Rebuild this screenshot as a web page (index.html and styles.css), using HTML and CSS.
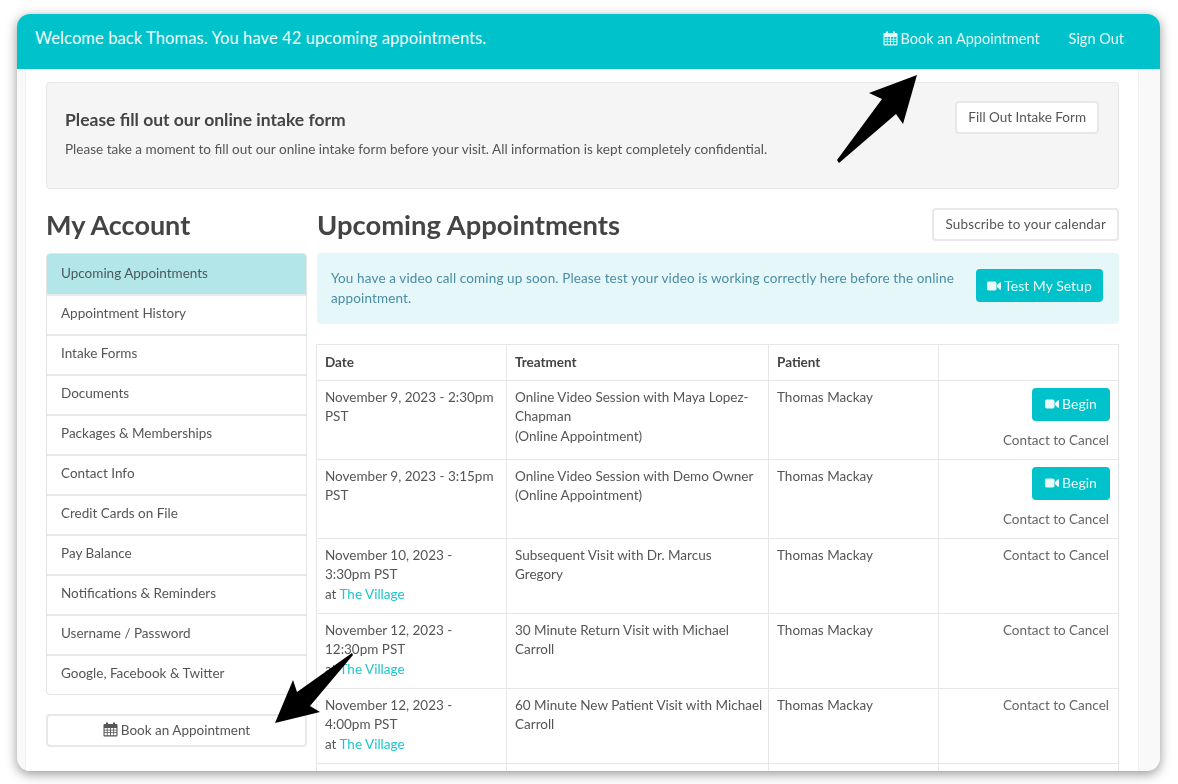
FILE: index.html
```html
<!DOCTYPE html>
<html lang="en">
<head>
<meta charset="utf-8">
<title>My Account</title>
<link rel="stylesheet" href="styles.css">
</head>
<body>
<svg class="icon-defs" width="0" height="0" aria-hidden="true">
  <symbol id="cal" viewBox="0 0 15 15">
    <path fill="currentColor" fill-rule="evenodd" d="M3 0.500h2v1.600h5V0.500h2v1.600h1.500q1 0 1 1v10.400q0 1-1 1H1.500q-1 0-1-1V3.100q0-1 1-1H3zM1.600 6v1.800h2.200V6zM4.600 6v1.800h2.400V6zM7.900 6v1.800h2.400V6zM11.100 6v1.800h2.300V6zM1.600 8.600v1.700h2.200V8.600zM4.600 8.600v1.700h2.400V8.600zM7.900 8.600v1.700h2.400V8.600zM11.100 8.600v1.700h2.300V8.600zM1.600 11.100v2.100h2.200v-2.100zM4.600 11.100v2.100h2.400v-2.100zM7.900 11.100v2.100h2.400v-2.100zM11.100 11.100v2.100h2.300v-2.100z"/>
  </symbol>
  <symbol id="vid" viewBox="0 0 14 10">
    <rect x="0" y="0.500" width="9.500" height="9" rx="1.800" fill="currentColor"/>
    <path fill="currentColor" d="M10 4l3-2.700q1-.5 1 .5v6.400q0 1-1 .5L10 6z"/>
  </symbol>
</svg>
<div class="window">
  <header class="topbar">
    <div class="welcome">Welcome back Thomas. You have 42 upcoming appointments.</div>
    <nav class="topnav">
      <a class="topnav-link"><svg class="ic-cal"><use href="#cal"/></svg>Book an Appointment</a>
      <a class="topnav-link">Sign Out</a>
    </nav>
  </header>
  <div class="page">
    <section class="intake">
      <div>
        <h3 class="intake-title">Please fill out our online intake form</h3>
        <p class="intake-text">Please take a moment to fill out our online intake form before your visit. All information is kept completely confidential.</p>
      </div>
      <a class="btn">Fill Out Intake Form</a>
    </section>
    <div class="columns">
      <aside class="side">
        <h1 class="heading">My Account</h1>
        <ul class="menu">
          <li class="menu-item active">Upcoming Appointments</li>
          <li class="menu-item">Appointment History</li>
          <li class="menu-item">Intake Forms</li>
          <li class="menu-item">Documents</li>
          <li class="menu-item">Packages &amp; Memberships</li>
          <li class="menu-item">Contact Info</li>
          <li class="menu-item">Credit Cards on File</li>
          <li class="menu-item">Pay Balance</li>
          <li class="menu-item">Notifications &amp; Reminders</li>
          <li class="menu-item">Username / Password</li>
          <li class="menu-item">Google, Facebook &amp; Twitter</li>
        </ul>
        <a class="btn btn-block"><svg class="ic-cal"><use href="#cal"/></svg>Book an Appointment</a>
      </aside>
      <main class="main">
        <div class="main-head">
          <h1 class="heading heading-main">Upcoming Appointments</h1>
          <a class="btn btn-sub">Subscribe to your calendar</a>
        </div>
        <div class="alert">
          <p class="alert-text">You have a video call coming up soon. Please test your video is working correctly here before the online appointment.</p>
          <a class="btn-teal btn-setup"><svg class="ic-vid"><use href="#vid"/></svg>Test My Setup</a>
        </div>
        <table class="appts">
          <thead>
            <tr class="row-head"><th class="c-date">Date</th><th class="c-treat">Treatment</th><th class="c-pat">Patient</th><th></th></tr>
          </thead>
          <tbody>
            <tr class="row-a">
              <td>November 9, 2023 - 2:30pm PST</td>
              <td class="treat">Online Video Session with Maya Lopez-Chapman<br>(Online Appointment)</td>
              <td>Thomas Mackay</td>
              <td class="act"><a class="btn-teal btn-begin"><svg class="ic-vid"><use href="#vid"/></svg>Begin</a><div class="cancel">Contact to Cancel</div></td>
            </tr>
            <tr class="row-a">
              <td>November 9, 2023 - 3:15pm PST</td>
              <td class="treat">Online Video Session with Demo Owner<br>(Online Appointment)</td>
              <td>Thomas Mackay</td>
              <td class="act"><a class="btn-teal btn-begin"><svg class="ic-vid"><use href="#vid"/></svg>Begin</a><div class="cancel">Contact to Cancel</div></td>
            </tr>
            <tr class="row-b">
              <td>November 10, 2023 - 3:30pm PST<br>at <a class="place">The Village</a></td>
              <td class="treat">Subsequent Visit with Dr. Marcus<br>Gregory</td>
              <td>Thomas Mackay</td>
              <td class="act">Contact to Cancel</td>
            </tr>
            <tr class="row-b">
              <td>November 12, 2023 - 12:30pm PST<br>at <a class="place">The Village</a></td>
              <td class="treat">30 Minute Return Visit with Michael Carroll</td>
              <td>Thomas Mackay</td>
              <td class="act">Contact to Cancel</td>
            </tr>
            <tr class="row-b">
              <td>November 12, 2023 - 4:00pm PST<br>at <a class="place">The Village</a></td>
              <td class="treat">60 Minute New Patient Visit with Michael Carroll</td>
              <td>Thomas Mackay</td>
              <td class="act">Contact to Cancel</td>
            </tr>
            <tr class="row-b"><td></td><td class="treat"></td><td></td><td></td></tr>
          </tbody>
        </table>
      </main>
    </div>
  </div>
</div>
<svg class="arrows" viewBox="0 0 1178 784" aria-hidden="true">
  <path d="M917 75L869 93L882 99L837 160L839 163L896 114L903 124Z"/>
  <path d="M353 655L352 653L297 692L293 680L275 723L320 712L310 706Z"/>
</svg>
</body>
</html>
```
FILE: styles.css
```css
* { box-sizing: border-box; }
html, body { margin: 0; height: 100%; }
body {
  position: relative;
  width: 1178px;
  height: 784px;
  overflow: hidden;
  background: #fff;
  font-family: "Lato", "Liberation Sans", sans-serif;
  font-size: 13.500px;
  color: #555;
  padding: 14px 18px 13px 17px;
}
.icon-defs { position: absolute; }
.window {
  height: 757px;
  border-radius: 13px;
  overflow: hidden;
  background: #f9f9f9;
  box-shadow: 0 3px 12px rgba(0,0,0,.42);
  display: flex;
  flex-direction: column;
  filter: blur(.4px);
}
.topbar {
  flex: none;
  height: 55px;
  background: #00c2cb;
  color: #fff;
  display: flex;
  align-items: center;
  justify-content: space-between;
  padding: 0 36px 8px 18px;
}
.welcome { font-size: 16.500px; letter-spacing: .1px; color: #f2fdfd; }
.topnav { display: flex; gap: 29px; margin-top: 2px; }
.topnav-link { font-size: 14.500px; color: #e4f8f9; display: flex; align-items: center; }
.ic-cal { width: 15px; height: 15px; margin-right: 3px; flex: none; }
.ic-vid { width: 14px; height: 10px; margin-right: 3px; flex: none; }
.page {
  flex: 1;
  min-height: 0;
  margin: 0 21px 0 8px;
  padding: 13px 19px 0 20px;
  background: #fff;
  border-left: 1px solid #eee;
  border-right: 1px solid #eee;
}
.intake {
  height: 107px;
  background: #f5f5f5;
  border: 1px solid #e6e6e6;
  border-radius: 4px;
  padding: 18px 19px 0 18px;
  display: flex;
  justify-content: space-between;
  align-items: flex-start;
}
.intake-title { margin: 9px 0 10px; font-size: 17.500px; line-height: 20px; font-weight: 700; color: #444; }
.intake-text { margin: 0; font-size: 13.550px; line-height: 18px; color: #555; }
.btn {
  display: flex;
  align-items: center;
  justify-content: center;
  height: 33px;
  padding: 0 11px 2px;
  background: #fff;
  border: 2px solid #e8e8e8;
  border-radius: 4px;
  font-size: 13.500px;
  color: #555;
  white-space: nowrap;
}
.btn-block { width: 100%; margin-top: 19px; }
.btn-sub { letter-spacing: .15px; }
.columns { display: flex; gap: 10px; margin-top: 19px; }
.side { width: 261px; flex: none; }
.main { flex: 1; min-width: 0; }
.heading { margin: 0; font-size: 27px; line-height: 33px; font-weight: 700; color: #444; }
.heading-main { font-size: 27.400px; }
.side .heading { margin-bottom: 12px; }
.menu {
  list-style: none;
  margin: 0;
  padding: 0;
  border: 1px solid #e4e4e4;
  border-radius: 4px;
  overflow: hidden;
}
.menu-item {
  height: 40px;
  padding: 0 14px 4px;
  display: flex;
  align-items: center;
  border-top: 2px solid #e8e8e8;
  font-size: 13.500px;
  color: #555;
}
.menu-item.active { background: #b3e6e8; color: #4a5a5c; }
.menu-item:first-child { border-top: 0; padding-bottom: 2px; }
.main-head { display: flex; justify-content: space-between; align-items: flex-start; margin-bottom: 12px; height: 33px; }
.alert {
  height: 71px;
  background: #e5f7f8;
  border-radius: 4px;
  padding: 0 16px 0 14px;
  display: flex;
  align-items: center;
  justify-content: space-between;
  gap: 22px;
}
.alert-text { margin: 0; font-size: 13.500px; line-height: 19.500px; letter-spacing: .135px; color: #4b8da5; }
.btn-teal {
  display: inline-flex;
  align-items: center;
  justify-content: center;
  height: 33px;
  background: #00c2cb;
  border-radius: 4px;
  color: #eafafa;
  font-size: 14px;
  white-space: nowrap;
  flex: none;
}
.btn-setup { width: 127px; align-self: flex-start; margin-top: 16px; }
.btn-begin { width: 78px; margin-right: -1px; }
.appts {
  width: calc(100% + 1px);
  margin: 20px 0 0 -1px;
  table-layout: fixed;
  border-collapse: collapse;
  font-size: 13.500px;
  line-height: 19.500px;
  color: #555;
}
.appts th, .appts td { border: 1px solid #e6e6e6; text-align: left; vertical-align: top; padding: 7px 8px 8px; font-weight: 400; }
.appts th { font-weight: 700; color: #444; padding: 8px 8px 7px; }
.appts td.treat { padding-right: 2px; }
.c-date { width: 190px; }
.c-treat { width: 262px; }
.c-pat { width: 170px; }
.row-head { height: 35px; }
.row-a { height: 79px; }
.row-b { height: 75px; }
.appts td.act { text-align: right; color: #666; padding-right: 9px; }
.cancel { margin-top: 10px; }
.place { color: #1cc6cf; }
.arrows {
  position: absolute;
  left: 0;
  top: 0;
  width: 1178px;
  height: 784px;
  fill: #000;
  filter: blur(.7px);
  pointer-events: none;
}
```
